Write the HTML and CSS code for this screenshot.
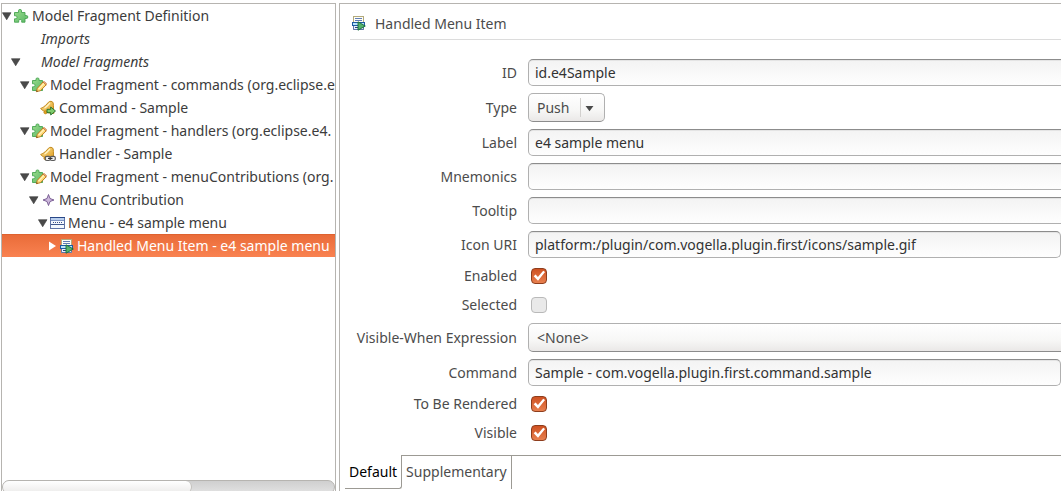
FILE: index.html
```html
<!DOCTYPE html>
<html lang="en">
<head>
<meta charset="utf-8">
<title>Model Fragment Definition</title>
<link rel="stylesheet" href="styles.css">
</head>
<body>
<svg class="defs" aria-hidden="true">
  <defs>
    <linearGradient id="greenFill" x1="0" y1="0" x2="1" y2="1">
      <stop offset="0" stop-color="#9bdc8c"/><stop offset="1" stop-color="#5cb868"/>
    </linearGradient>
    <linearGradient id="goldFill" x1="0" y1="0" x2="1" y2="1">
      <stop offset="0" stop-color="#ffe9a0"/><stop offset="1" stop-color="#dc9614"/>
    </linearGradient>
    <symbol id="open" viewBox="0 0 10 16"><path d="M.4 4.700h8.600L4.700 11.800z" fill="#4a4a4a" stroke="#3a3a3a" stroke-width=".6"/></symbol>
    <symbol id="closed" viewBox="0 0 10 16"><path d="M2 3.500L9 8l-7 4.500z" fill="#fff"/></symbol>
    <symbol id="puzzle" viewBox="0 0 16 16">
      <path d="M1.500 4.500H5.500V2.500Q5.500 1.500 7 1.500Q8.500 1.500 8.500 2.500V4.500H12V7.500H13.500Q14.800 7.500 14.800 9Q14.800 10.500 13.500 10.500H12V14.200H8.700V12.500Q8.700 11.500 7.200 11.500Q5.700 11.500 5.700 12.500V14.200H1.500V10.800H3Q4 10.800 4 9.300Q4 7.800 3 7.800H1.500Z" fill="url(#greenFill)" stroke="#48a552" stroke-width=".9"/>
    </symbol>
    <symbol id="fragment" viewBox="0 0 16 16">
      <path d="M1.500 3.500H5V2Q5 1 6.500 1Q8 1 8 2V3.500H11.500V13.500H1.500V9.800H3Q4 9.800 4 8.300Q4 6.800 3 6.800H1.500Z" fill="url(#greenFill)" stroke="#48a552" stroke-width=".9"/>
      <path d="M5.300 14.700L6.300 11.300L12 5L15.200 7.800L9.500 13.700Z" fill="#ffd873" stroke="#b8741c" stroke-width=".9"/>
      <path d="M7.600 12L13 6.500" stroke="#fff3bd" stroke-width="1.200"/>
      <path d="M12 5L13 4.200L15.800 6.700L15.200 7.800Z" fill="#f2a890" stroke="#b8741c" stroke-width=".5"/>
      <path d="M5.300 14.700L5.800 13.200L7 14.300Z" fill="#5b3b12"/>
    </symbol>
    <symbol id="bell" viewBox="0 0 16 16">
      <path d="M.6 8.500C4 7.500 6.500 4.500 8.500 2.200C9.500 .9 12.700 .9 13.200 3C13.700 6 13.200 10 14 13.300C10 13.500 4 12.300 .6 8.500Z" fill="url(#goldFill)" stroke="#bd8212" stroke-width=".9"/>
      <path d="M4.500 8.200C7 6.700 8.200 4.700 10 3" fill="none" stroke="#fff4c6" stroke-width="1.200"/>
      <circle cx="5.500" cy="12.300" r="1.600" fill="#e2a320" stroke="#b17b12" stroke-width=".6"/>
    </symbol>
    <symbol id="command" viewBox="0 0 16 16">
      <use href="#bell"/>
      <path d="M7 9.300H10.700V7L15.500 11L10.700 15V12.700H7Z" fill="#7fcc6c" stroke="#216d2d" stroke-width=".9"/>
    </symbol>
    <symbol id="handler" viewBox="0 0 16 16">
      <use href="#bell"/>
      <g fill="#eee" stroke="#5c5c5c" stroke-width="1.200"><rect x="5.300" y="10.300" width="5" height="4.200" rx="1.500"/><rect x="10.300" y="10.300" width="5" height="4.200" rx="1.500"/></g>
      <path d="M8 12.400H12.500" stroke="#333" stroke-width="1.200"/>
    </symbol>
    <symbol id="contribution" viewBox="0 0 16 16">
      <path d="M8.500 2.500L10 6.500L14 8L10 9.500L8.500 13.500L7 9.500L3 8L7 6.500Z" fill="#cdb8dc" stroke="#71548c" stroke-width=".9"/>
    </symbol>
    <symbol id="menu" viewBox="0 0 16 16">
      <rect x="1.500" y="2.500" width="14" height="11" fill="#f3f8ff" stroke="#5f74a8"/>
      <path d="M1 2.500H16" stroke="#284787"/>
      <rect x="2" y="3" width="13" height="2" fill="#b9cfee"/>
      <path d="M2 5.500H15" stroke="#7d93c4"/>
      <path d="M4 7.500H13" stroke="#3c4f86" stroke-dasharray="1 1"/>
      <path d="M2 9.500H15" stroke="#40588f"/>
    </symbol>
    <symbol id="item" viewBox="0 0 16 16">
      <rect x="3.500" y="1.500" width="10" height="13" fill="#fdfdf6" stroke="#b3aa7c"/>
      <path d="M5 3.500H12M5 5.500H12" stroke="#617db6"/>
      <rect x="2.500" y="7.500" width="12" height="3" fill="#b9e3fa" stroke="#1c5aa0"/>
      <path d="M3.500 11V14.500H13.500V11" fill="#e9effa" stroke="#5e75a8"/>
      <path d="M5 12.500H8" stroke="#24457e"/>
      <path d="M8 6.800L15.300 11L8 15.200Z" fill="#56b36c" stroke="#146a3b" stroke-width=".9"/>
    </symbol>
    <symbol id="drop" viewBox="0 0 10 8"><path d="M.5 1H9.500L5 7z" fill="#4a4a4a"/></symbol>
  </defs>
</svg>
<main class="editor">
  <nav class="outline" aria-label="Model outline">
    <ul class="tree" role="tree">
      <li class="node" role="treeitem"><svg class="arrow"><use href="#open"/></svg><svg class="icon"><use href="#puzzle"/></svg><span>Model Fragment Definition</span></li>
      <li class="node level-1 group" role="treeitem"><span class="arrow"></span><span class="icon"></span><span>Imports</span></li>
      <li class="node level-1 group" role="treeitem"><svg class="arrow"><use href="#open"/></svg><span class="icon"></span><span>Model Fragments</span></li>
      <li class="node level-2" role="treeitem"><svg class="arrow"><use href="#open"/></svg><svg class="icon"><use href="#fragment"/></svg><span>Model Fragment - commands (org.eclipse.e</span></li>
      <li class="node level-3" role="treeitem"><span class="arrow"></span><svg class="icon"><use href="#command"/></svg><span>Command - Sample</span></li>
      <li class="node level-2" role="treeitem"><svg class="arrow"><use href="#open"/></svg><svg class="icon"><use href="#fragment"/></svg><span>Model Fragment - handlers (org.eclipse.e4.</span></li>
      <li class="node level-3" role="treeitem"><span class="arrow"></span><svg class="icon"><use href="#handler"/></svg><span>Handler - Sample</span></li>
      <li class="node level-2" role="treeitem"><svg class="arrow"><use href="#open"/></svg><svg class="icon"><use href="#fragment"/></svg><span>Model Fragment - menuContributions (org.</span></li>
      <li class="node level-3" role="treeitem"><svg class="arrow"><use href="#open"/></svg><svg class="icon"><use href="#contribution"/></svg><span>Menu Contribution</span></li>
      <li class="node level-4" role="treeitem"><svg class="arrow"><use href="#open"/></svg><svg class="icon"><use href="#menu"/></svg><span>Menu - e4 sample menu</span></li>
      <li class="node level-5 selected" role="treeitem" aria-selected="true"><svg class="arrow"><use href="#closed"/></svg><svg class="icon"><use href="#item"/></svg><span>Handled Menu Item - e4 sample menu</span></li>
    </ul>
    <div class="scrollbar"><div class="thumb"></div></div>
  </nav>
  <section class="details">
    <header class="title"><svg class="icon"><use href="#item"/></svg><h1>Handled Menu Item</h1></header>
    <form class="form">
      <label for="id">ID</label><input class="text wide" id="id" type="text" value="id.e4Sample">
      <label for="type">Type</label>
      <div class="combo short"><select id="type"><option>Push</option></select><svg class="drop"><use href="#drop"/></svg></div>
      <label for="label">Label</label><input class="text wide" id="label" type="text" value="e4 sample menu">
      <label for="mnemonics">Mnemonics</label><input class="text wide" id="mnemonics" type="text">
      <label for="tooltip">Tooltip</label><input class="text wide" id="tooltip" type="text">
      <label for="icon">Icon URI</label><input class="text" id="icon" type="text" value="platform:/plugin/com.vogella.plugin.first/icons/sample.gif">
      <label for="enabled">Enabled</label><input class="check" id="enabled" type="checkbox" checked>
      <label for="selected">Selected</label><input class="check" id="selected" type="checkbox" disabled>
      <label for="visible-when">Visible-When Expression</label>
      <div class="combo wide"><select id="visible-when"><option>&lt;None&gt;</option></select></div>
      <label for="command-id">Command</label><input class="text" id="command-id" type="text" value="Sample - com.vogella.plugin.first.command.sample">
      <label for="rendered">To Be Rendered</label><input class="check" id="rendered" type="checkbox" checked>
      <label for="visible">Visible</label><input class="check" id="visible" type="checkbox" checked>
    </form>
    <div class="tabs" role="tablist">
      <button class="tab active" role="tab" type="button" aria-selected="true">Default</button>
      <button class="tab" role="tab" type="button" aria-selected="false">Supplementary</button>
      <div class="tab-rest"></div>
    </div>
  </section>
</main>
</body>
</html>
```
FILE: styles.css
```css
* { box-sizing: border-box; }

body {
  margin: 0;
  background: #fff;
  color: #3c3c3c;
  font: 14px/23px "Noto Sans", "Open Sans", sans-serif;
}

.defs { position: absolute; width: 0; height: 0; }

.editor {
  display: flex;
  gap: 3px;
  height: 100vh;
  padding: 3px 0 0 1px;
  overflow: hidden;
}

.outline {
  display: flex;
  flex-direction: column;
  justify-content: space-between;
  flex: 0 0 335px;
  border: 1px solid #b6b4b0;
  border-bottom: 0;
  overflow: hidden;
}

.tree { margin: 0; padding: 0; list-style: none; }

.node {
  display: flex;
  align-items: center;
  height: 23px;
  white-space: nowrap;
}

.level-1 { padding-left: 9px; }
.level-2 { padding-left: 18px; }
.level-3 { padding-left: 27px; }
.level-4 { padding-left: 36px; }
.level-5 { padding-left: 45px; }

.group { font-style: italic; }

.selected {
  color: #fff;
  background: linear-gradient(#e96b38, #f98251);
  box-shadow: inset 0 1px 0 #df622f;
}

.arrow { flex: none; width: 10px; height: 16px; margin-right: 1px; }
.icon { flex: none; width: 16px; height: 16px; margin-right: 3px; }

.scrollbar {
  flex: none;
  height: 14px;
  margin-bottom: -3px;
  border: 1px solid #b6b4b0;
  border-radius: 7px;
  background: linear-gradient(#cfcfcf, #e2e2e2);
}

.thumb {
  width: 57%;
  height: 12px;
  border-right: 1px solid #c4c2be;
  border-radius: 6px;
  background: linear-gradient(#fff, #ecebea);
}

.details {
  flex: 1;
  min-width: 0;
  border: 1px solid #b6b4b0;
  border-width: 1px 0 0 1px;
  overflow: hidden;
}

.title {
  display: flex;
  align-items: center;
  height: 36px;
  margin-left: 10px;
  padding-top: 3px;
  border-bottom: 1px solid #dcdcdc;
}

.title .icon { margin-right: 9px; }
.title h1 { margin: 0; font-size: 14px; font-weight: 400; color: #4c4c4c; }

.form {
  display: grid;
  grid-template-columns: 166px 1fr;
  gap: 7px 11px;
  align-items: center;
  padding: 19px 0 11px 11px;
}

.form label { text-align: right; white-space: nowrap; line-height: 22px; color: #4c4c4c; }

.text {
  width: 100%;
  height: 27px;
  padding: 0 6px;
  border: 1px solid #b0b0b0;
  border-top-color: #8c8c8c;
  border-radius: 5px;
  background: linear-gradient(#f3f3f3, #fefefe);
  box-shadow: inset 0 1px 0 #e4e4e4;
  color: #333;
  font: inherit;
}

.wide { width: calc(100% + 12px); }

.combo { position: relative; height: 29px; }
.short { width: 77px; }

.combo select {
  appearance: none;
  width: 100%;
  height: 29px;
  padding: 0 8px;
  border: 1px solid #b0b0b0;
  border-bottom-color: #8c8c8c;
  border-radius: 5px;
  background: linear-gradient(#fff, #f7f7f6 60%, #eae8e7);
  color: #4c4c4c;
  font: inherit;
}

.short::after {
  content: "";
  position: absolute;
  top: 5px;
  right: 24px;
  width: 1px;
  height: 19px;
  background: #d2d0ce;
}

.drop { position: absolute; top: 12px; right: 11px; width: 9px; height: 7px; pointer-events: none; }

.check {
  appearance: none;
  width: 16px;
  height: 16px;
  margin: 0 0 0 3px;
  border: 1px solid #b9b9b9;
  border-radius: 4px;
  background: #e9e9e9;
}

.check:checked {
  border-color: #8e3d1c;
  background: linear-gradient(#cf5121, #e8804f);
}

.check:checked::before {
  content: "";
  display: block;
  width: 14px;
  height: 14px;
  background: #fff;
  clip-path: polygon(12% 52%, 26% 40%, 42% 58%, 80% 12%, 93% 22%, 43% 84%);
}

.tabs { display: flex; height: 34px; padding-left: 5px; }

.tab {
  height: 34px;
  padding: 0 4px 2px 4px;
  border: solid #9c9a94;
  border-width: 1px 1px 0 0;
  background: #fff;
  color: #4c4c4c;
  font: inherit;
}

.tab.active {
  padding: 0 4px;
  border-width: 0 1px 1px 0;
  border-bottom-right-radius: 3px;
  color: #000;
}

.tab-rest { flex: 1; border-top: 1px solid #9c9a94; }
```
